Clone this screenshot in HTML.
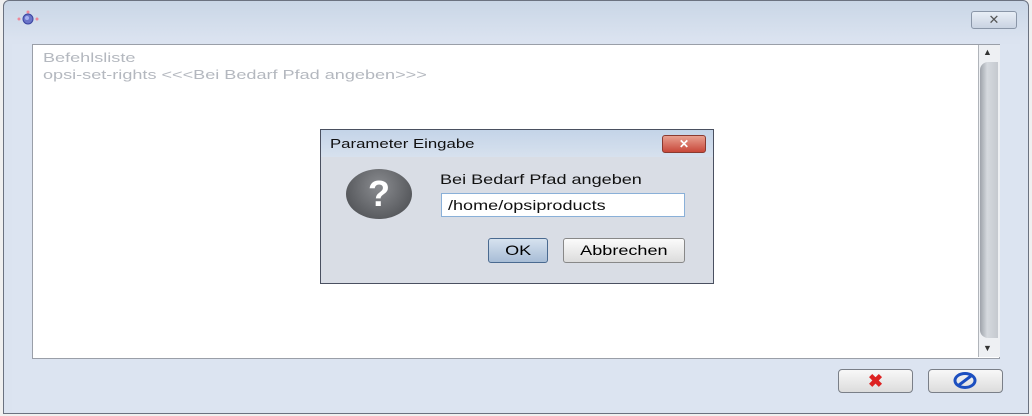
<!DOCTYPE html>
<html><head><style>
body{margin:0;width:1032px;height:416px;background:#f0f0f0;position:relative;overflow:hidden;font-family:"Liberation Sans",sans-serif}
.a{position:absolute}
.s{display:inline-block;transform:scaleX(1.29);transform-origin:left top;white-space:nowrap}
.t{display:inline-block;transform:scaleX(1.39);transform-origin:left top;white-space:nowrap}
.c{display:inline-block;transform:scaleX(1.29);transform-origin:center top;white-space:nowrap}
</style></head><body>
<div class="a" style="left:3px;top:0;width:1024px;height:412px;border:1px solid #6b7280;border-radius:6px 6px 0 0;background:linear-gradient(#c9d6e6,#dbe3f0 40px,#dbe3f0)"></div>
<div class="a" style="left:12px;top:44px;width:1008px;height:368px;background:#dce4f1"></div>
<svg class="a" style="left:16px;top:10px" width="24" height="18"><circle cx="12" cy="9" r="5" fill="#6a74c8" stroke="#3a44a0"/><circle cx="11" cy="8" r="2" fill="#a6b0f0"/><circle cx="3" cy="9" r="1.5" fill="#e89"/><circle cx="21" cy="9" r="1.5" fill="#e89"/><circle cx="12" cy="2" r="1.5" fill="#e89"/></svg>
<div class="a" style="left:971px;top:11px;width:44px;height:16px;border:1px solid #8a96a8;border-radius:3px;background:linear-gradient(#e8eef6,#c9d3e2);font-size:13px;color:#555;text-align:center;line-height:16px">✕</div>
<div class="a" style="left:32px;top:44px;width:966px;height:313px;background:#fff;border:1px solid #9a9fa8"></div>
<div class="a" style="left:43px;top:49px;font-size:13px;color:#b4b8bf;line-height:17px"><span class="t">Befehlsliste</span><br><span class="t">opsi-set-rights &lt;&lt;&lt;Bei Bedarf Pfad angeben&gt;&gt;&gt;</span></div>
<div class="a" style="left:978px;top:45px;width:21px;height:312px;background:#eef0f3;border-left:1px solid #b0b4ba"></div>
<div class="a" style="left:980px;top:62px;width:18px;height:276px;background:linear-gradient(90deg,#9ea3aa,#d5d9de 40%,#c5c9cf);border-radius:8px 0 0 8px"></div>
<div class="a" style="left:983px;top:47px;font-size:9px;color:#333">▲</div>
<div class="a" style="left:983px;top:343px;font-size:9px;color:#333">▼</div>
<div class="a" style="left:838px;top:369px;width:73px;height:22px;border:1px solid #7a7f88;border-radius:4px;background:linear-gradient(#f8f8f8,#dcdcdc);text-align:center;color:#d22;font-size:18px;font-weight:bold;line-height:22px">✖</div>
<div class="a" style="left:928px;top:369px;width:73px;height:22px;border:1px solid #7a7f88;border-radius:4px;background:linear-gradient(#f8f8f8,#dcdcdc)"></div>
<svg class="a" style="left:953px;top:372px" width="24" height="17"><ellipse cx="12" cy="8.5" rx="10" ry="7" fill="none" stroke="#1c4fc0" stroke-width="3"/><line x1="6" y1="13" x2="18" y2="4" stroke="#1c4fc0" stroke-width="3"/></svg>
<div class="a" style="left:320px;top:129px;width:392px;height:153px;border:1px solid #4a5060;background:#d9dde5"></div>
<div class="a" style="left:321px;top:130px;width:392px;height:27px;background:linear-gradient(#c4d4e8,#d7e1ee)"></div>
<div class="a" style="left:330px;top:136px;font-size:13px;color:#111"><span class="s">Parameter Eingabe</span></div>
<div class="a" style="left:662px;top:135px;width:42px;height:16px;border:1px solid #8a3a30;border-radius:3px;background:linear-gradient(#e8a090,#c8483a);color:#fff;font-size:12px;text-align:center;line-height:16px;font-weight:bold">✕</div>
<div class="a" style="left:346px;top:169px;width:66px;height:50px;border-radius:50%;background:radial-gradient(circle at 50% 35%,#8a8c90,#45474b);color:#fff;font-size:36px;font-weight:bold;text-align:center;line-height:50px">?</div>
<div class="a" style="left:440px;top:171px;font-size:14px;color:#111"><span class="s">Bei Bedarf Pfad angeben</span></div>
<div class="a" style="left:441px;top:193px;width:244px;height:24px;background:#fff;border:1px solid #8ab0d8;font-size:14px;line-height:22px;color:#111;padding-left:6px;box-sizing:border-box"><span class="s">/home/opsiproducts</span></div>
<div class="a" style="left:488px;top:238px;width:58px;height:23px;border:1px solid #4a6a90;border-radius:3px;background:linear-gradient(#d6e2ef,#a8bdd6);font-size:14px;text-align:center;line-height:23px"><span class="c">OK</span></div>
<div class="a" style="left:563px;top:238px;width:120px;height:23px;border:1px solid #888;border-radius:3px;background:linear-gradient(#fbfbfb,#dcdcdc);font-size:14px;text-align:center;line-height:23px"><span class="c">Abbrechen</span></div>
</body></html>
